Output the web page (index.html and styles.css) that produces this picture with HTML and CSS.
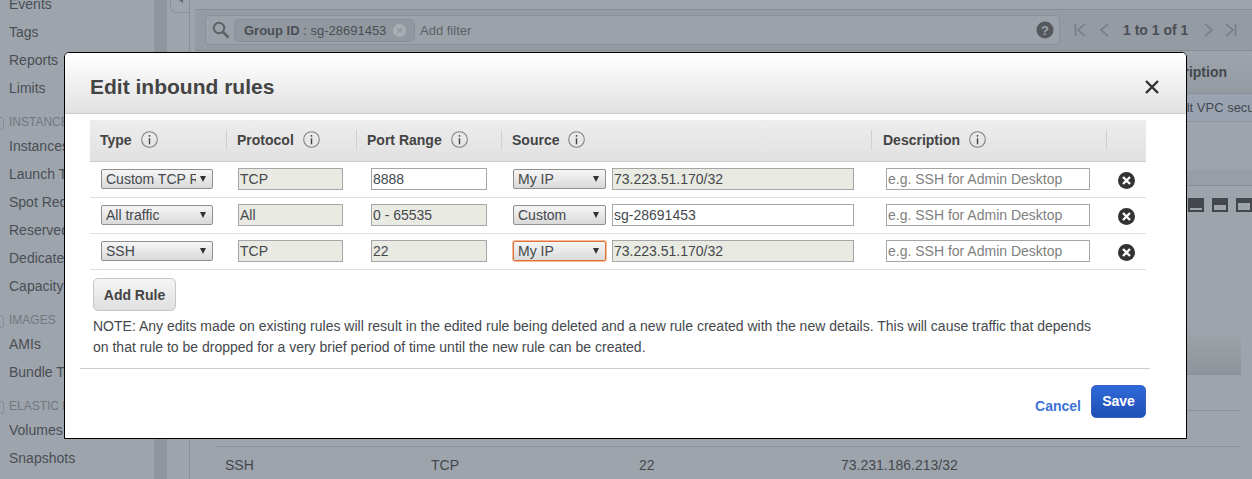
FILE: index.html
```html
<!DOCTYPE html>
<html lang="en">
<head>
  <meta charset="UTF-8" />
  <title>Edit inbound rules</title>
  <link rel="stylesheet" href="styles.css">
</head>
<body>
  <div class="page">
    <nav class="sidebar">
      <a>Events</a>
      <a>Tags</a>
      <a>Reports</a>
      <a>Limits</a>
      <h4>INSTANCES</h4>
      <a>Instances</a>
      <a>Launch Templates</a>
      <a>Spot Requests</a>
      <a>Reserved Instances</a>
      <a>Dedicated Hosts</a>
      <a>Capacity Reservations</a>
      <h4>IMAGES</h4>
      <a>AMIs</a>
      <a>Bundle Tasks</a>
      <h4>ELASTIC BLOCK STORE</h4>
      <a>Volumes</a>
      <a>Snapshots</a>
    </nav>
    <div class="strip"></div>
    <div class="gutter"><div class="notch"><i class="notch-arrow"></i></div></div>

    <main class="content">
      <div class="filter-bar">
        <div class="search">
          <svg class="search-icon" width="18" height="18" viewBox="0 0 18 18"><circle cx="7" cy="7" r="5.2" fill="none" stroke="#5f6368" stroke-width="2"/><path d="M11 11l5.5 5.5" stroke="#5f6368" stroke-width="2.6"/></svg>
          <span class="chip"><span><b>Group ID</b> : sg-28691453</span>
            <svg class="chip-x" width="13" height="13" viewBox="0 0 13 13"><circle cx="6.5" cy="6.5" r="6.5" fill="#a9aeb5"/><path d="M4.3 4.3l4.4 4.4M8.7 4.3l-4.4 4.4" stroke="#92989f" stroke-width="1.6"/></svg>
          </span>
          <span class="add-filter">Add filter</span>
          <svg class="help" width="18" height="18" viewBox="0 0 18 18"><circle cx="9" cy="9" r="8.5" fill="#55595e"/><text x="9" y="13.5" text-anchor="middle" class="help-q">?</text></svg>
        </div>
        <div class="pager">
          <svg width="12" height="14" viewBox="0 0 12 14"><path d="M1.5 1v12M11 1L4 7l7 6" class="pg"/></svg>
          <svg width="10" height="14" viewBox="0 0 10 14"><path d="M9 1L2 7l7 6" class="pg"/></svg>
          <b>1 to 1 of 1</b>
          <svg width="10" height="14" viewBox="0 0 10 14"><path d="M1 1l7 6-7 6" class="pg"/></svg>
          <svg class="pg-last" width="12" height="14" viewBox="0 0 12 14"><path d="M1 1l7 6-7 6M10.5 1v12" class="pg"/></svg>
        </div>
      </div>

      <div class="bg-head"><b>Description</b></div>
      <div class="bg-row">Default VPC security group</div>
      <div class="bg-band"></div>
      <div class="bg-tools">
        <i class="tool t1"></i>
        <i class="tool t2"></i>
        <i class="tool t3"></i>
      </div>
      <div class="bg-lower">
        <div class="bg-lower-head"></div>
        <div class="bg-lower-row"></div>
        <div class="bg-lower-row"></div>
        <div class="bg-lower-row last">
          <span class="c1">SSH</span>
          <span class="c2">TCP</span>
          <span class="c3">22</span>
          <span>73.231.186.213/32</span>
        </div>
      </div>
    </main>
  </div>

  <section class="modal">
    <header class="modal-head">
      <h2>Edit inbound rules</h2>
      <svg class="close" width="14" height="14" viewBox="0 0 14 14"><path d="M1 1l12 12M13 1L1 13" stroke="#333" stroke-width="2.4"/></svg>
    </header>

    <table class="rules">
      <colgroup>
        <col class="w-type"><col class="w-proto"><col class="w-port"><col class="w-src"><col class="w-desc"><col class="w-del">
      </colgroup>
      <thead>
        <tr>
          <th><div class="th first-th">Type <svg class="info" viewBox="0 0 17 17"><circle cx="8.5" cy="8.5" r="7.8"/><path d="M8.5 4v1.8M8.5 7.2v6"/></svg></div></th>
          <th><div class="th">Protocol <svg class="info" viewBox="0 0 17 17"><circle cx="8.5" cy="8.5" r="7.8"/><path d="M8.5 4v1.8M8.5 7.2v6"/></svg></div></th>
          <th><div class="th">Port Range <svg class="info" viewBox="0 0 17 17"><circle cx="8.5" cy="8.5" r="7.8"/><path d="M8.5 4v1.8M8.5 7.2v6"/></svg></div></th>
          <th><div class="th">Source <svg class="info" viewBox="0 0 17 17"><circle cx="8.5" cy="8.5" r="7.8"/><path d="M8.5 4v1.8M8.5 7.2v6"/></svg></div></th>
          <th><div class="th th-desc">Description <svg class="info" viewBox="0 0 17 17"><circle cx="8.5" cy="8.5" r="7.8"/><path d="M8.5 4v1.8M8.5 7.2v6"/></svg></div></th>
          <th><div class="th"></div></th>
        </tr>
      </thead>
      <tbody>
        <tr>
          <td class="cell-type"><span class="sel sel-type"><select><option>Custom TCP Rule</option></select></span></td>
          <td class="cell-proto"><input class="box proto" value="TCP" disabled></td>
          <td class="cell-port"><input class="box port" value="8888"></td>
          <td class="cell-src"><span class="sel sel-src"><select><option>My IP</option></select></span><input class="box src" value="73.223.51.170/32" disabled></td>
          <td class="cell-desc"><input class="box desc" placeholder="e.g. SSH for Admin Desktop"></td>
          <td class="cell-del"><svg class="del" width="17" height="17" viewBox="0 0 17 17"><circle cx="8.5" cy="8.5" r="8.5" fill="#333"/><path d="M5 5l7 7M12 5l-7 7" stroke="#fff" stroke-width="2.4"/></svg></td>
        </tr>
        <tr>
          <td class="cell-type"><span class="sel sel-type"><select><option>All traffic</option></select></span></td>
          <td class="cell-proto"><input class="box proto" value="All" disabled></td>
          <td class="cell-port"><input class="box port" value="0 - 65535" disabled></td>
          <td class="cell-src"><span class="sel sel-src"><select><option>Custom</option></select></span><input class="box src" value="sg-28691453"></td>
          <td class="cell-desc"><input class="box desc" placeholder="e.g. SSH for Admin Desktop"></td>
          <td class="cell-del"><svg class="del" width="17" height="17" viewBox="0 0 17 17"><circle cx="8.5" cy="8.5" r="8.5" fill="#333"/><path d="M5 5l7 7M12 5l-7 7" stroke="#fff" stroke-width="2.4"/></svg></td>
        </tr>
        <tr>
          <td class="cell-type"><span class="sel sel-type"><select><option>SSH</option></select></span></td>
          <td class="cell-proto"><input class="box proto" value="TCP" disabled></td>
          <td class="cell-port"><input class="box port" value="22" disabled></td>
          <td class="cell-src"><span class="sel sel-src focus"><select><option>My IP</option></select></span><input class="box src" value="73.223.51.170/32" disabled></td>
          <td class="cell-desc"><input class="box desc" placeholder="e.g. SSH for Admin Desktop"></td>
          <td class="cell-del"><svg class="del" width="17" height="17" viewBox="0 0 17 17"><circle cx="8.5" cy="8.5" r="8.5" fill="#333"/><path d="M5 5l7 7M12 5l-7 7" stroke="#fff" stroke-width="2.4"/></svg></td>
        </tr>
      </tbody>
    </table>

    <button class="add-rule">Add Rule</button>
    <p class="note">NOTE: Any edits made on existing rules will result in the edited rule being deleted and a new rule created with the new details. This will cause traffic that depends on that rule to be dropped for a very brief period of time until the new rule can be created.</p>

    <footer class="modal-foot">
      <a class="cancel">Cancel</a>
      <button class="save">Save</button>
    </footer>
  </section>
</body>
</html>
```

FILE: styles.css
```css
* { box-sizing: border-box; }
html, body { margin: 0; height: 479px; overflow: hidden; }
body { font-family: "Liberation Sans", Arial, sans-serif; font-size: 14px; color: #44484d; background: #9ea4ac; }

/* dimmed page behind the dialog */
.page { display: flex; height: 479px; overflow: hidden; }
.sidebar { width: 154px; flex: none; height: 489px; margin-top: -10px; padding-left: 9px; white-space: nowrap; overflow: hidden; }
.sidebar a { display: block; height: 28px; line-height: 28px; color: #4a4e54; }
.sidebar h4 { position: relative; margin: 9px 0 0; height: 21px; line-height: 22px; font-size: 12px; font-weight: normal; color: #73787f; }
.sidebar h4::before { content: ""; position: absolute; left: -20px; top: 6px; width: 13px; height: 11px; border: 1px solid #868c94; border-radius: 3px; }
.strip { width: 13px; flex: none; background: #8f959d; }
.gutter { width: 23px; flex: none; border-right: 1px solid #8a9098; }
.notch { height: 16px; margin-left: 3px; padding-left: 8px; border: 1px solid #8a9098; border-top: 0; border-right: 0; border-radius: 0 0 0 6px; }
.notch-arrow { display: block; width: 0; height: 0; border: 3px solid transparent; border-right: 4px solid #5f6368; border-left: 0; margin-top: -3px; }

.content { flex: 1; min-width: 0; }
.filter-bar { display: flex; align-items: center; height: 42px; margin: 9px 0 0 5px; padding-left: 10px; background: #959ba3; border-top: 1px solid #878d95; border-bottom: 1px solid #878d95; }
.search { display: flex; align-items: center; width: 855px; height: 30px; padding: 0 5px 0 6px; background: #9ca2aa; border: 1px solid #8a9098; border-radius: 4px; font-size: 13px; }
.search-icon { flex: none; margin-right: 4px; }
.chip { display: flex; align-items: center; justify-content: space-between; height: 23px; width: 181px; padding: 0 8px 0 9px; background: #92989f; border: 1px solid #8a9098; border-radius: 5px; color: #4a4e54; white-space: nowrap; }
.add-filter { margin-left: 5px; color: #5d6167; }
.help { margin-left: auto; margin-right: 0; }
.help-q { font-size: 13px; font-weight: bold; fill: #9ca2aa; }
.pager { display: flex; align-items: center; gap: 13px; margin-left: 14px; white-space: nowrap; color: #4a4e54; }
.pager b { margin: 0 3px 0 1px; }
.pg-last { margin-left: -2px; }
.pg { fill: none; stroke: #767b82; stroke-width: 1.5; }

.bg-head { height: 43px; line-height: 42px; padding-left: 960px; white-space: nowrap; border-bottom: 1px solid #8a9098; background: linear-gradient(#9ea4ac, #949aa2); }
.bg-row { height: 28px; line-height: 27px; padding-left: 962px; white-space: nowrap; font-size: 13px; background: #9aa3b1; border-bottom: 1px solid #8e949c; }
.bg-band { height: 16px; margin-top: 48px; background: #989ea6; border-bottom: 1px solid #8a9098; }
.bg-tools { display: flex; gap: 8px; height: 148px; padding: 12px 0 0 998px; }
.tool { display: block; width: 16px; height: 14px; flex: none; }
.t1 { background: linear-gradient(#9ea4ac, #9ea4ac) no-repeat center bottom 2px / 12px 2px, #44484d; }
.t2 { background: linear-gradient(#9ea4ac, #9ea4ac) no-repeat center bottom 2px / 12px 5px, #44484d; }
.t3 { background: linear-gradient(#9ea4ac, #9ea4ac) no-repeat center bottom 2px / 12px 7px, #44484d; }
.bg-lower { margin-right: 11px; }
.bg-lower-head { height: 41px; background: linear-gradient(#9ea3a9, #8e949b); border-bottom: 1px solid #8a9098; }
.bg-lower-row { height: 36px; margin-left: 25px; border-bottom: 1px solid #8a9098; }
.bg-lower-row.last { display: flex; height: 32px; padding: 10px 0 0 10px; font-size: 14px; border-bottom: 0; }
.c1 { width: 206px; }
.c2 { width: 208px; }
.c3 { width: 202px; }

/* dialog */
.modal { position: absolute; left: 64px; top: 52px; width: 1123px; height: 387px; background: #fff; border: 1px solid #000; border-radius: 5px 5px 0 0; }
.modal-head { display: flex; align-items: center; justify-content: space-between; height: 61px; padding: 8px 27px 0 25px; background: linear-gradient(#fff, #e1e1e1); border-bottom: 1px solid #ccc; border-radius: 4px 4px 0 0; }
.modal-head h2 { margin: 0; font-size: 21px; font-weight: bold; color: #444; }

.rules { width: 1056px; margin: 6px 0 0 25px; border-collapse: separate; border-spacing: 0; table-layout: fixed; }
.w-type { width: 136px; }
.w-proto { width: 130px; }
.w-port { width: 145px; }
.w-src { width: 370px; }
.w-desc { width: 235px; }
.w-del { width: 40px; }
.rules th { height: 42px; padding: 0 0 2px; text-align: left; background: linear-gradient(#ededed, #e1e1e1); border-bottom: 1px solid #ccc; }
.th { display: flex; align-items: center; gap: 5px; height: 20px; padding-left: 10px; border-left: 1px solid #d0d0d0; font-weight: bold; color: #444; white-space: pre; }
.first-th { border-left: 0; }
.th-desc { padding-left: 11px; }
.info { width: 17px; height: 17px; flex: none; }
.info circle { fill: none; stroke: #808080; stroke-width: 1.1; }
.info path { fill: none; stroke: #444; stroke-width: 1.4; }

.rules td { height: 36px; padding: 0; border-bottom: 1px solid #e0e0e0; vertical-align: top; font-size: 0; }
.box { height: 22px; margin-top: 6px; padding: 0 1px; border: 1px solid #a6a6a6; border-radius: 0; background: #fff; font: 14px "Liberation Sans", Arial, sans-serif; color: #44484d; vertical-align: top; }
.box:disabled { background: #e9eae2; color: #44484d; opacity: 1; }
.box::placeholder { color: #808080; opacity: 1; }
.proto { width: 105px; margin-left: 12px; }
.port { width: 116px; margin-left: 15px; }
.src { width: 242px; margin-left: 6px; }
.desc { width: 204px; margin-left: 15px; }

.sel { position: relative; display: inline-block; height: 20px; margin-top: 7px; vertical-align: top; }
.sel select { display: block; width: 100%; height: 20px; padding: 0 16px 0 4px; appearance: none; border: 1px solid #8e8e8e; border-radius: 2px; background: linear-gradient(#f6f6f6, #d9d9d9); font: 14px "Liberation Sans", Arial, sans-serif; color: #44484d; }
.sel::after { content: ""; position: absolute; top: 7px; right: 7px; border: 3px solid transparent; border-top: 6px solid #333; border-bottom: 0; pointer-events: none; }
.sel-type { width: 112px; margin-left: 11px; }
.sel-src { width: 93px; margin-left: 12px; }
.sel.focus select { border-color: #e2703a; box-shadow: 0 0 0 1px #f6b99a; }
.del { display: block; margin: 10px 0 0 12px; }

.add-rule { display: block; width: 83px; height: 33px; margin: 8px 0 0 28px; padding: 0; border: 1px solid #c6c6c6; border-radius: 5px; background: linear-gradient(#f5f5f5, #dfdfdf); font: bold 14px "Liberation Sans", Arial, sans-serif; color: #444; }
.note { width: 1010px; margin: 5px 0 0 28px; line-height: 21px; color: #44484d; }

.modal-foot { display: flex; align-items: flex-end; justify-content: flex-end; gap: 10px; width: 1070px; margin: 10px 0 0 15px; padding: 16px 4px 0 0; border-top: 1px solid #ccc; }
.cancel { margin-bottom: 4px; font-weight: bold; color: #3b73d9; }
.save { width: 55px; height: 33px; padding: 0 0 2px; border: 1px solid #3463c4; border-radius: 5px; background: linear-gradient(#2f69d8, #1f4fb4); font: bold 14px "Liberation Sans", Arial, sans-serif; color: #fff; }
```
